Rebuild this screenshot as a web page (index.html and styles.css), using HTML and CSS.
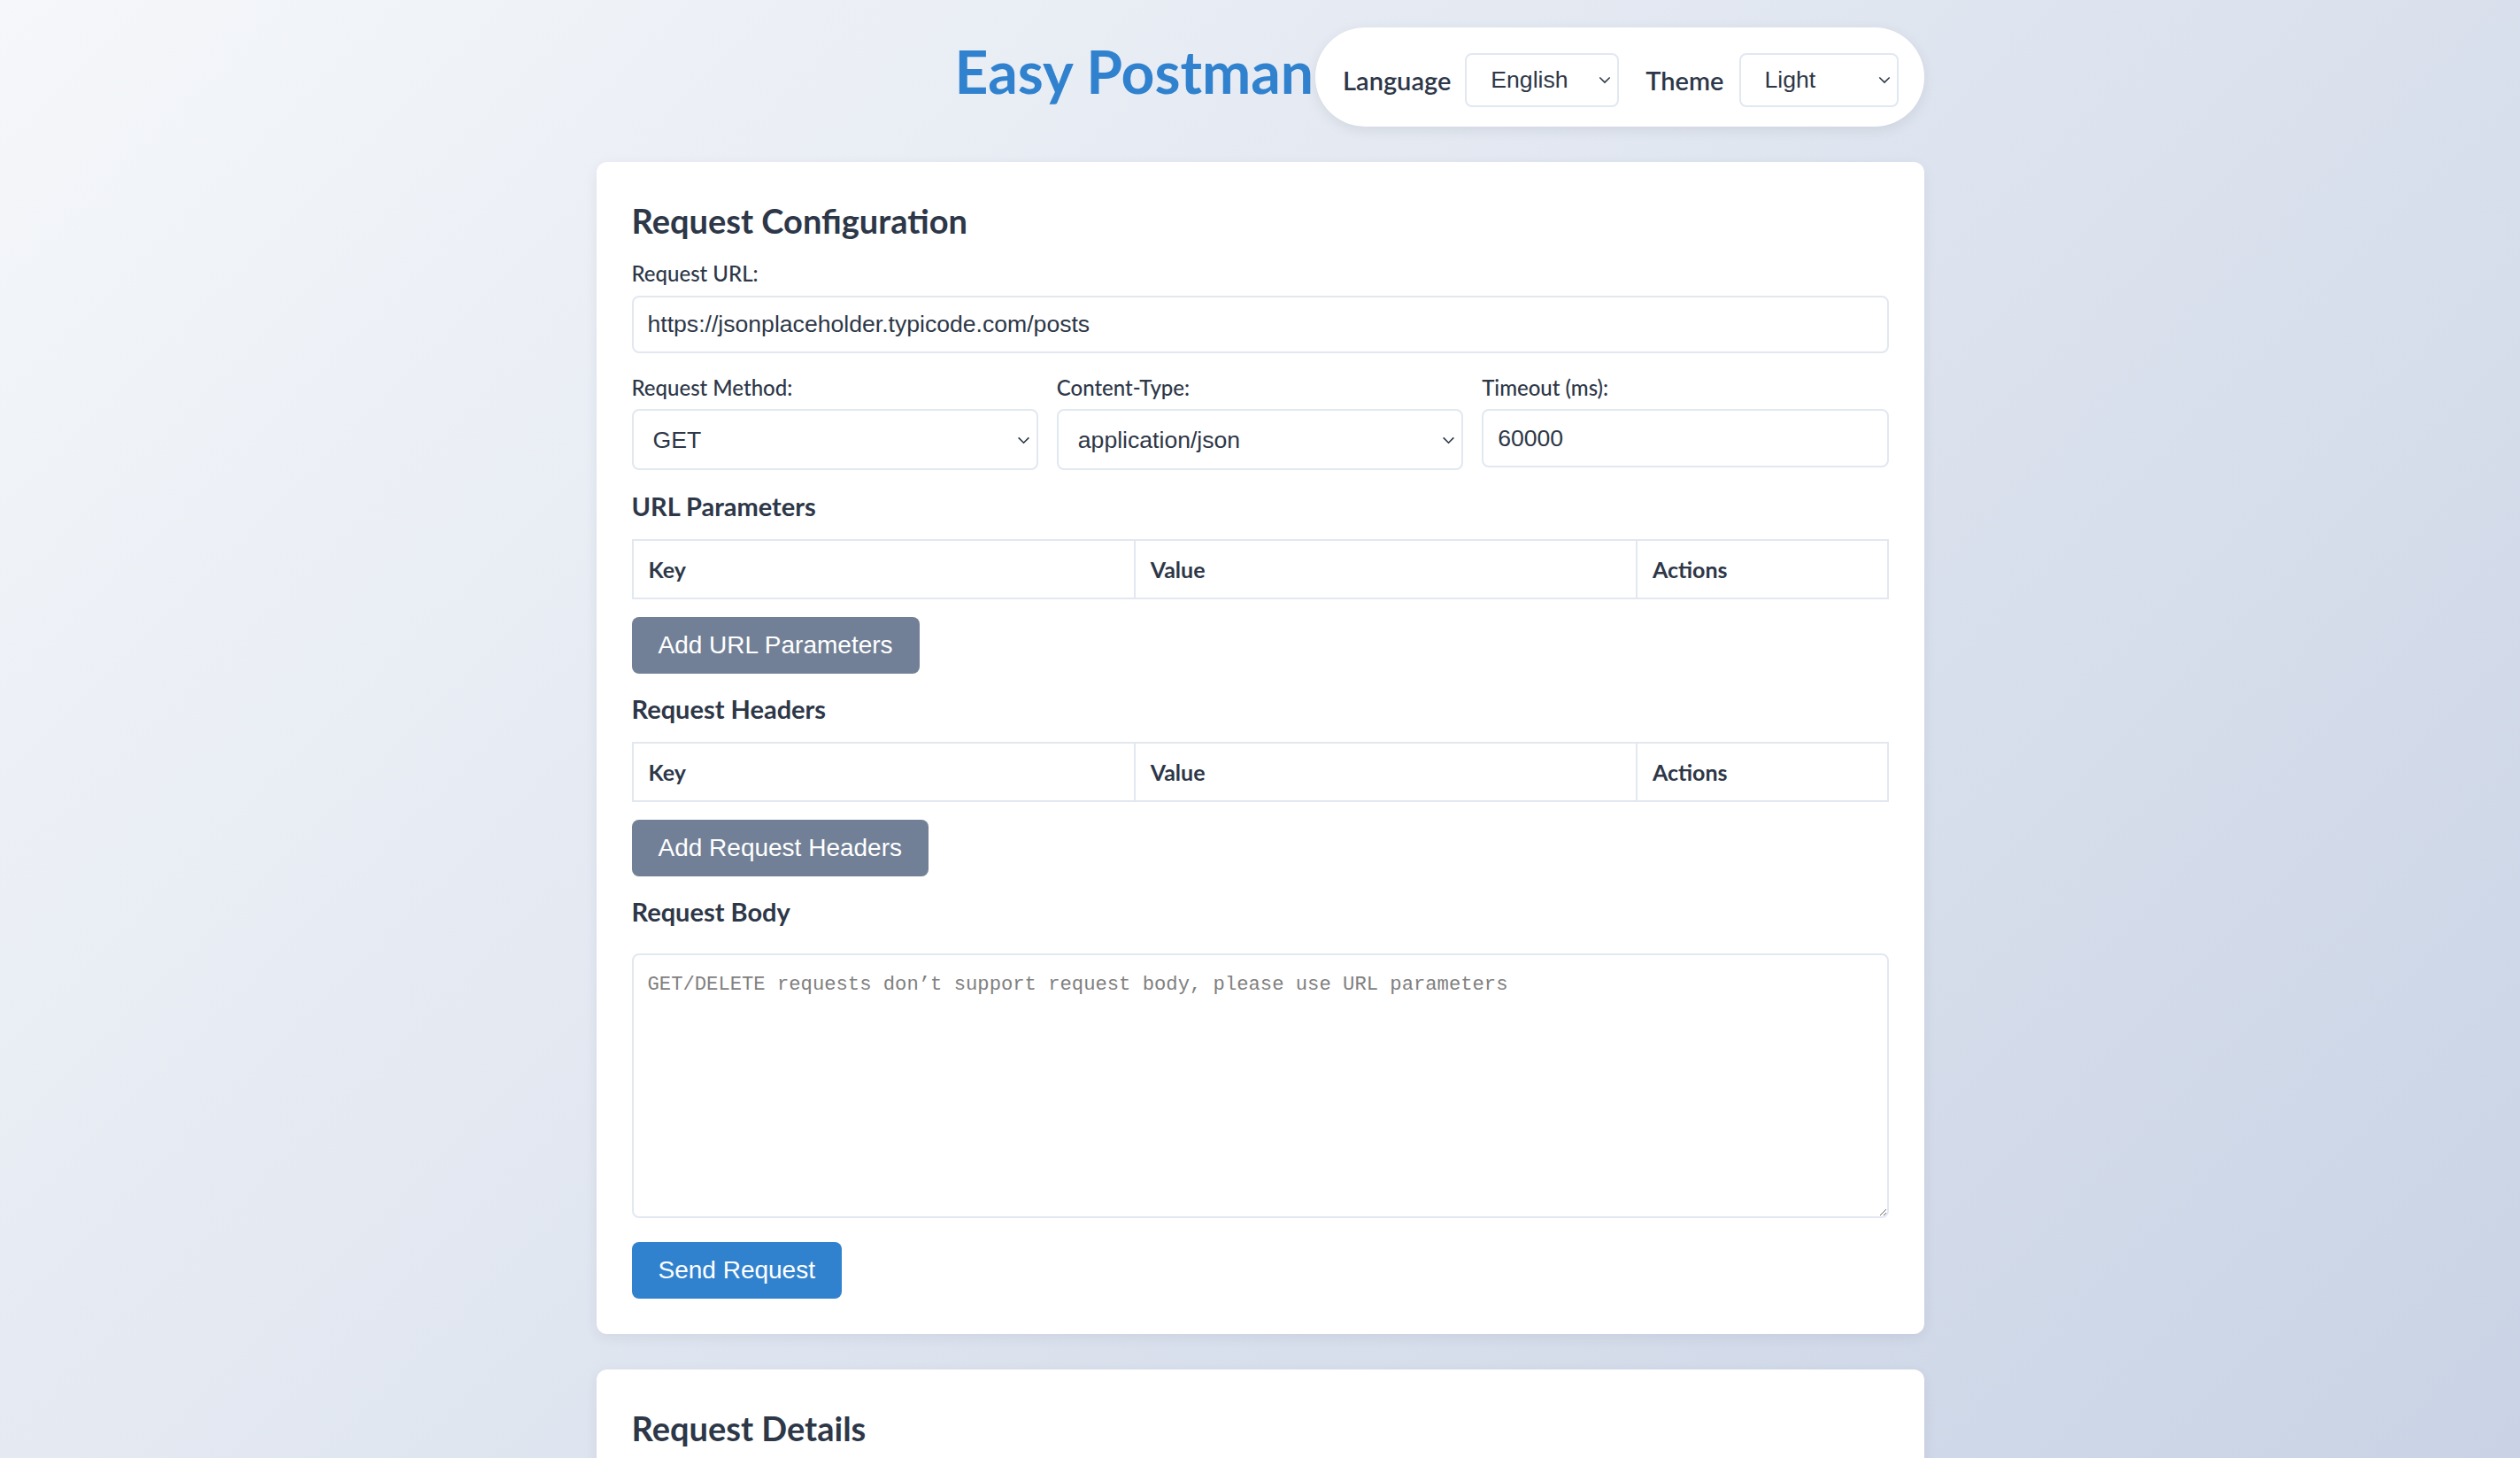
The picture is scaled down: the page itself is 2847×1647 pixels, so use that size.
FILE: index.html
```html
<!DOCTYPE html>
<html lang="en">
<head>
<meta charset="utf-8">
<title>Easy Postman</title>
<link rel="stylesheet" href="styles.css">
</head>
<body>
<div class="page">
  <header class="header">
    <h1 class="title">Easy Postman</h1>
    <div class="settings">
      <span class="settings-label">Language</span>
      <div class="select-wrap lang">
        <select class="control select"><option>English</option><option>中文</option></select>
        <svg class="chevron" viewBox="0 0 16 10" width="14" height="9"><path d="M1.5 1.5 L8 8 L14.5 1.5" fill="none" stroke="#2d3748" stroke-width="1.8"/></svg>
      </div>
      <span class="settings-label theme-label">Theme</span>
      <div class="select-wrap theme">
        <select class="control select"><option>Light</option><option>Dark</option></select>
        <svg class="chevron" viewBox="0 0 16 10" width="14" height="9"><path d="M1.5 1.5 L8 8 L14.5 1.5" fill="none" stroke="#2d3748" stroke-width="1.8"/></svg>
      </div>
    </div>
  </header>

  <section class="card">
    <h2 class="card-title">Request Configuration</h2>

    <div class="group">
      <label class="label">Request URL:</label>
      <input class="control input" type="text" value="https://jsonplaceholder.typicode.com/posts">
    </div>

    <div class="row">
      <div class="group">
        <label class="label">Request Method:</label>
        <div class="select-wrap">
          <select class="control select"><option>GET</option><option>POST</option><option>PUT</option><option>DELETE</option></select>
          <svg class="chevron" viewBox="0 0 16 10" width="15" height="9"><path d="M1.5 1.5 L8 8 L14.5 1.5" fill="none" stroke="#2d3748" stroke-width="1.8"/></svg>
        </div>
      </div>
      <div class="group">
        <label class="label">Content-Type:</label>
        <div class="select-wrap">
          <select class="control select"><option>application/json</option></select>
          <svg class="chevron" viewBox="0 0 16 10" width="15" height="9"><path d="M1.5 1.5 L8 8 L14.5 1.5" fill="none" stroke="#2d3748" stroke-width="1.8"/></svg>
        </div>
      </div>
      <div class="group">
        <label class="label">Timeout (ms):</label>
        <input class="control input timeout" type="text" value="60000">
      </div>
    </div>

    <h3 class="section-title">URL Parameters</h3>
    <table class="kv-table">
      <thead><tr><th class="col-key">Key</th><th class="col-value">Value</th><th>Actions</th></tr></thead>
    </table>
    <button class="btn btn-gray">Add URL Parameters</button>

    <h3 class="section-title">Request Headers</h3>
    <table class="kv-table">
      <thead><tr><th class="col-key">Key</th><th class="col-value">Value</th><th>Actions</th></tr></thead>
    </table>
    <button class="btn btn-gray">Add Request Headers</button>

    <h3 class="section-title body-title">Request Body</h3>
    <textarea class="control body-input" placeholder="GET/DELETE requests don’t support request body, please use URL parameters"></textarea>

    <button class="btn btn-blue">Send Request</button>
  </section>

  <section class="card">
    <h2 class="card-title">Request Details</h2>
    <div class="details-body"></div>
  </section>
</div>
</body>
</html>
```

FILE: styles.css
```css
html, body {
  margin: 0;
  padding: 0;
}

body {
  min-height: 100vh;
  background: linear-gradient(135deg, #f5f7fa 0%, #c9d3e5 100%) fixed;
  font-family: Lato, "Noto Sans", sans-serif;
  color: #2d3748;
}

.page {
  width: 1500px;
  margin: 0 auto;
  padding-top: 31px;
}

.header {
  display: flex;
  justify-content: flex-end;
  align-items: center;
  height: 112px;
  margin-bottom: 40px;
}

.title {
  margin: 0 2px 12px 0;
  font-size: 66px;
  font-weight: 700;
  line-height: 1.2;
  color: #3182ce;
  white-space: nowrap;
}

.settings {
  display: flex;
  align-items: center;
  height: 112px;
  box-sizing: border-box;
  padding: 6px 29px 0 31px;
  background: #fff;
  border-radius: 56px;
  box-shadow: 0 4px 14px rgba(45, 55, 72, 0.10);
}

.settings-label {
  font-size: 29px;
  font-weight: 600;
  margin-right: 16px;
}

.theme-label {
  margin-left: 30px;
  margin-right: 17px;
}

.select-wrap {
  position: relative;
}

.select-wrap.lang { width: 174px; }
.select-wrap.theme { width: 180px; }

.select-wrap .select {
  width: 100%;
}

.chevron {
  position: absolute;
  right: 9px;
  top: 50%;
  margin-top: -4px;
  pointer-events: none;
}

.card {
  background: #fff;
  border-radius: 12px;
  box-shadow: 0 4px 14px rgba(45, 55, 72, 0.08);
  padding: 44px 40px 40px 40px;
  margin-bottom: 40px;
}

.card-title {
  margin: 0 0 24px 0;
  font-size: 38px;
  line-height: 44px;
  font-weight: 700;
  color: #2d3748;
}

.group {
  margin-bottom: 25px;
}

.label {
  display: block;
  font-size: 24px;
  line-height: 28px;
  font-weight: 500;
  margin-bottom: 11px;
}

.control {
  box-sizing: border-box;
  font-family: "Liberation Sans", Arial, sans-serif;
  font-size: 26.6px;
  color: #2d3748;
  background: #fff;
  border: 2px solid #e2e8f0;
  border-radius: 8px;
  outline: none;
}

.input {
  display: block;
  width: 100%;
  height: 65px;
  padding: 0 16px;
}

.input.timeout {
  height: 66px;
  margin-top: 2px;
}

.select {
  display: block;
  height: 69px;
  padding: 0 40px 0 22px;
  -webkit-appearance: none;
  appearance: none;
}

.settings .select {
  height: 61px;
  padding-left: 27px;
}

.row {
  display: grid;
  grid-template-columns: 1fr 1fr 1fr;
  column-gap: 21px;
}

.row .group .label {
  margin-bottom: 10px;
}

.section-title {
  margin: 0 0 21px 0;
  font-size: 29px;
  line-height: 32px;
  font-weight: 700;
}

.kv-table {
  width: 100%;
  border-collapse: collapse;
  margin-bottom: 20px;
}

.kv-table th {
  height: 64px;
  padding: 0 17px;
  text-align: left;
  font-size: 25px;
  font-weight: 700;
  border: 2px solid #e2e8f0;
}

.kv-table .col-key,
.kv-table .col-value {
  width: 40%;
}

.btn {
  display: block;
  height: 64px;
  padding: 0 30px;
  border: none;
  border-radius: 8px;
  font-family: "Liberation Sans", Arial, sans-serif;
  font-size: 28px;
  color: #fff;
  cursor: pointer;
}

.btn-gray {
  background: #718096;
  margin-bottom: 24px;
}

.btn-blue {
  background: #3182ce;
}

.body-title {
  margin-bottom: 31px;
}

.body-input {
  display: block;
  width: 100%;
  height: 299px;
  padding: 20px 16px;
  font-family: "Liberation Mono", "Courier New", monospace;
  font-size: 22.2px;
  line-height: 1.3;
  margin-bottom: 27px;
  resize: vertical;
}

.body-input::placeholder {
  color: #808080;
}

.details-body {
  height: 300px;
}
```
